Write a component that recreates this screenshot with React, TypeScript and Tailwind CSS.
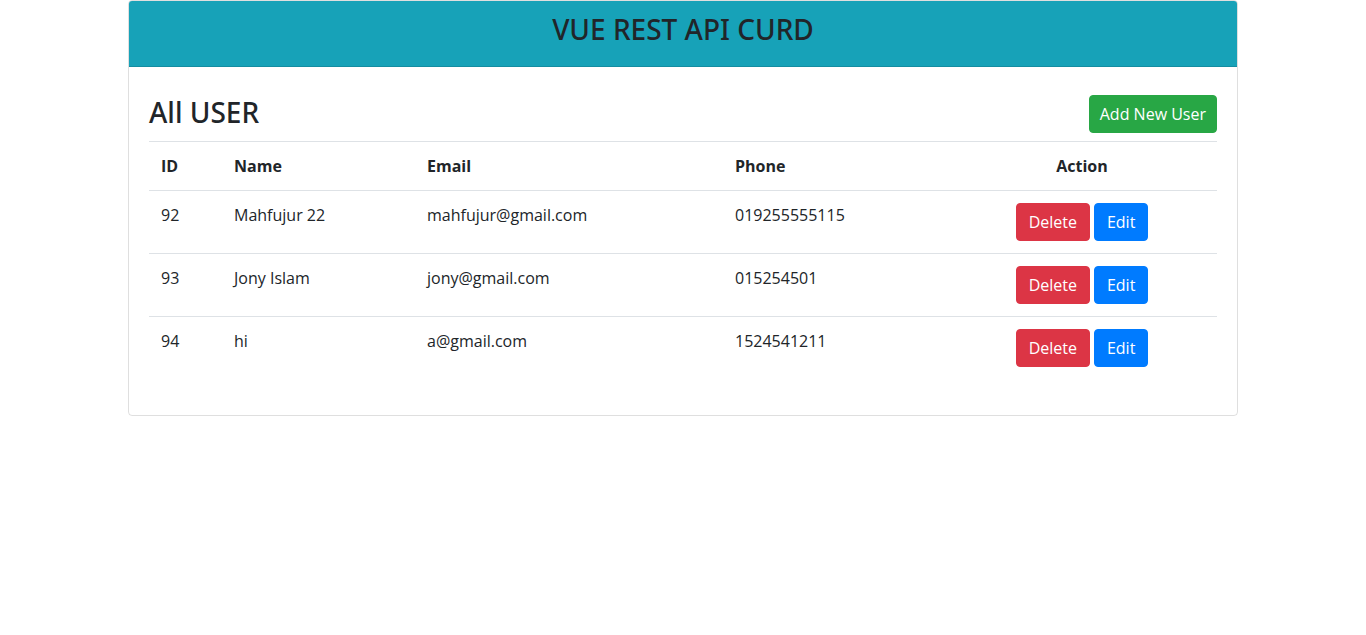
import React from "react";

const users = [
  { id: 92, name: "Mahfujur 22", email: "mahfujur@gmail.com", phone: "019255555115" },
  { id: 93, name: "Jony Islam", email: "jony@gmail.com", phone: "015254501" },
  { id: 94, name: "hi", email: "a@gmail.com", phone: "1524541211" },
];

const headFont = { fontFamily: '"Noto Sans", "Open Sans", sans-serif' };

export default function App() {
  return (
    <div className="min-h-[635px] bg-white text-[#212529] text-[16px] leading-[24px]" style={{ fontFamily: '"Open Sans", "Noto Sans", sans-serif' }}>
      <div className="w-[1110px] mx-auto">
        <div className="border border-[rgba(0,0,0,0.125)] rounded-[4px] overflow-hidden">
          <div className="bg-[#17a2b8] border-b border-[rgba(0,0,0,0.125)] px-5 pt-3 pb-3 h-[66px]">
            <h3 className="text-center text-[28px] leading-[34px] font-medium mt-[-1px]" style={headFont}>VUE REST API CURD</h3>
          </div>
          <div className="px-5 pt-5 pb-[36px]">
            <div className="flex items-center justify-between h-[54px]">
              <h3 className="text-[28px] leading-[34px] font-medium mt-[-4px]" style={headFont}>All USER</h3>
              <button className="bg-[#28a745] text-white px-[10px] py-[6px] rounded-[4px] border border-[#28a745] leading-[24px]">Add New User</button>
            </div>
            <table className="w-full border-collapse">
              <thead>
                <tr>
                  <th className="w-[73px] text-left font-bold p-3 border-t border-b border-[#dee2e6]">ID</th>
                  <th className="w-[193px] text-left font-bold p-3 border-t border-b border-[#dee2e6]">Name</th>
                  <th className="w-[308px] text-left font-bold p-3 border-t border-b border-[#dee2e6]">Email</th>
                  <th className="w-[224px] text-left font-bold p-3 border-t border-b border-[#dee2e6]">Phone</th>
                  <th className="text-center font-bold p-3 border-t border-b border-[#dee2e6]">Action</th>
                </tr>
              </thead>
              <tbody>
                {users.map((u, i) => (
                  <tr key={u.id}>
                    <td className={`p-3 align-top ${i > 0 ? "border-t border-[#dee2e6]" : ""}`}>{u.id}</td>
                    <td className={`p-3 align-top ${i > 0 ? "border-t border-[#dee2e6]" : ""}`}>{u.name}</td>
                    <td className={`p-3 align-top ${i > 0 ? "border-t border-[#dee2e6]" : ""}`}>{u.email}</td>
                    <td className={`p-3 align-top ${i > 0 ? "border-t border-[#dee2e6]" : ""}`}>{u.phone}</td>
                    <td className={`p-3 align-top text-center ${i > 0 ? "border-t border-[#dee2e6]" : ""}`}>
                      <div className="flex justify-center gap-1">
                        <button className="bg-[#dc3545] text-white px-3 py-[6px] rounded-[4px] border border-[#dc3545] leading-[24px]">Delete</button>
                        <button className="bg-[#007bff] text-white px-3 py-[6px] rounded-[4px] border border-[#007bff] leading-[24px]">Edit</button>
                      </div>
                    </td>
                  </tr>
                ))}
              </tbody>
            </table>
          </div>
        </div>
      </div>
    </div>
  );
}
